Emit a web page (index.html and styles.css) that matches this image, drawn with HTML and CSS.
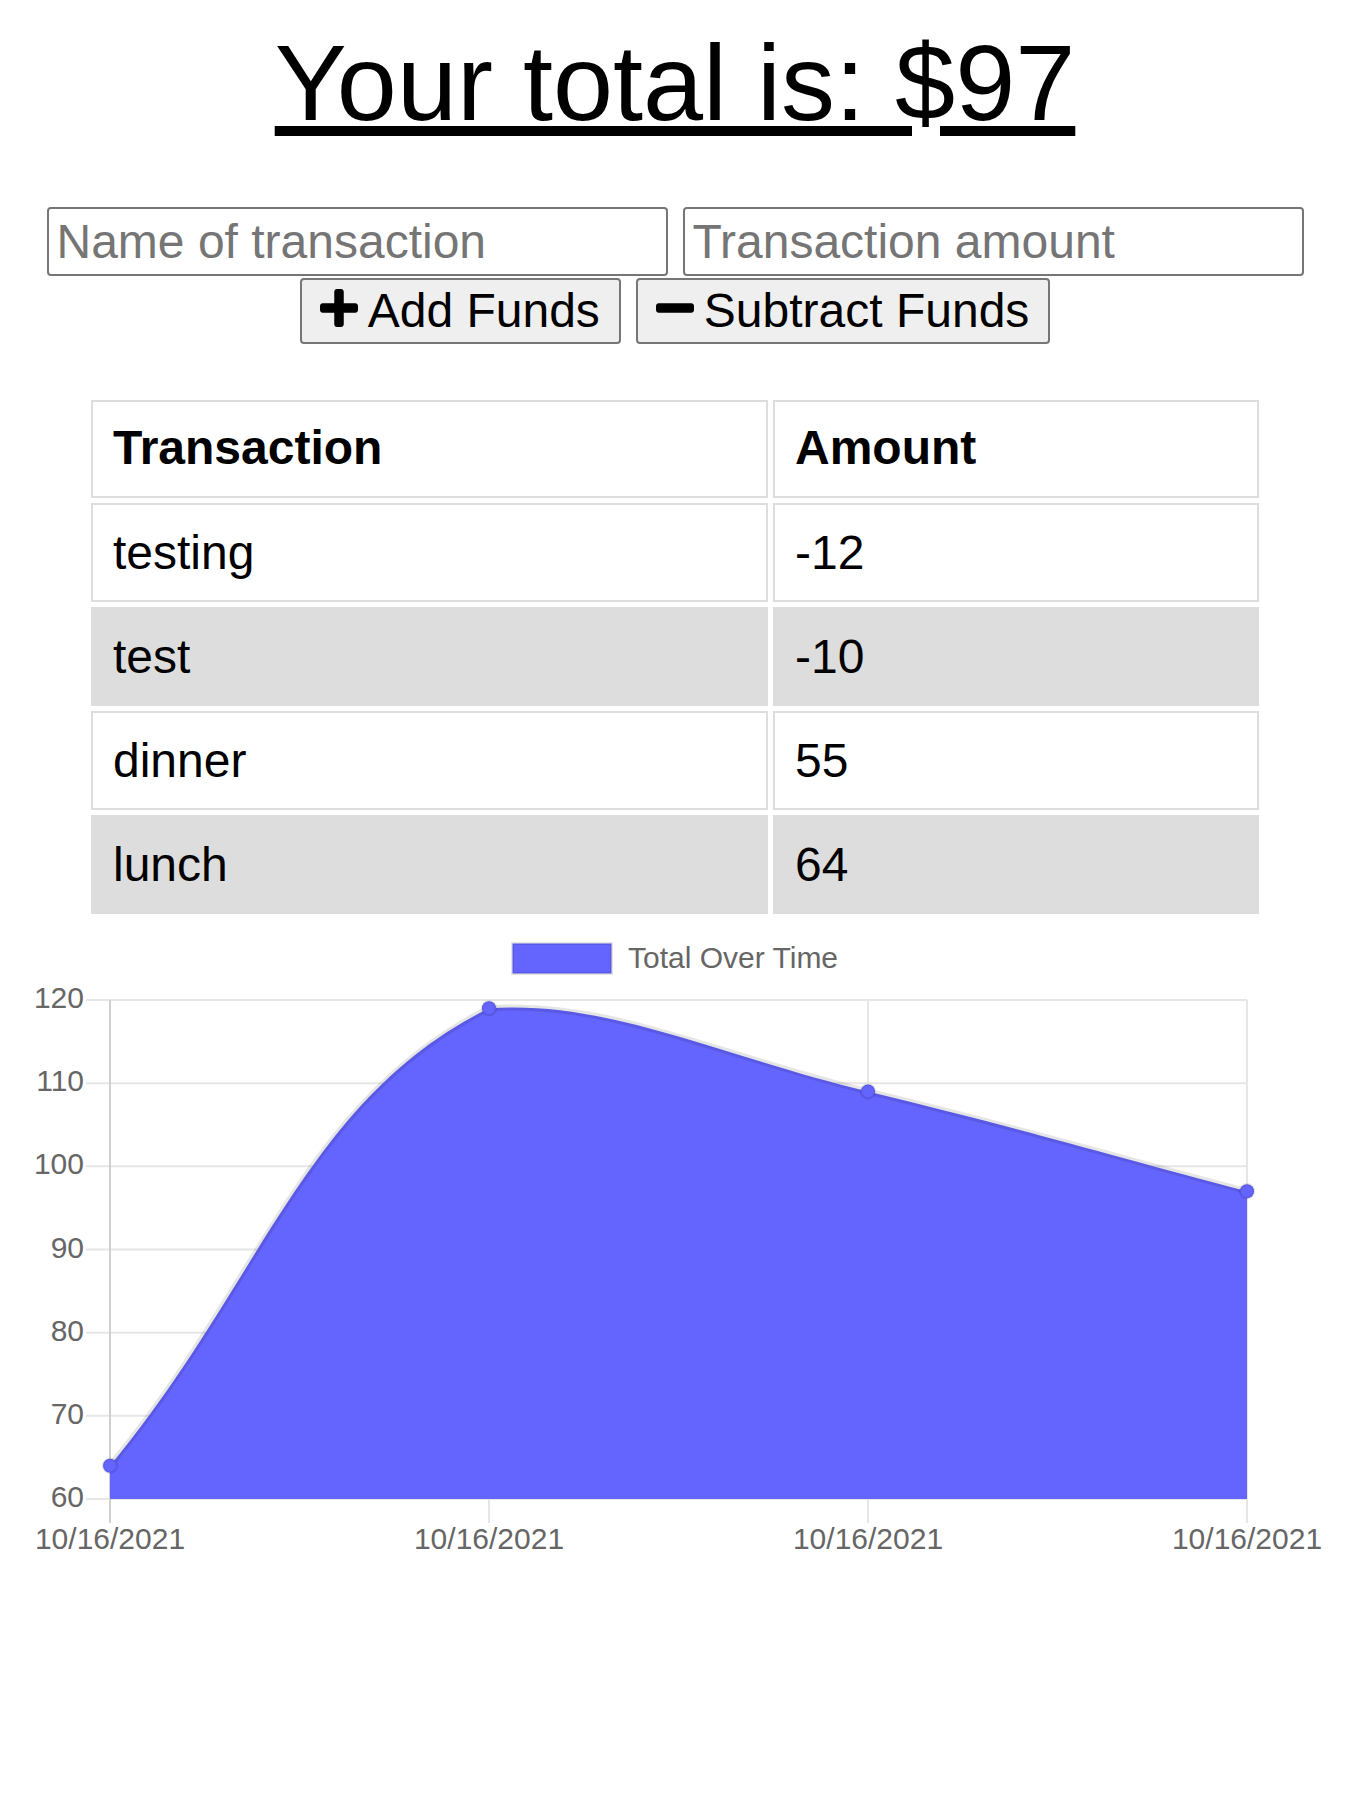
FILE: index.html
```html
<!DOCTYPE html>
<html lang="en">
<head>
<meta charset="utf-8">
<title>Budget Tracker</title>
<link rel="stylesheet" href="styles.css">
</head>
<body>
<h1 class="total">Your total is: $97</h1>
<form class="entry">
  <div class="fields">
    <input class="field" type="text" placeholder="Name of transaction">
    <input class="field" type="number" placeholder="Transaction amount">
  </div>
  <div class="actions">
    <button class="btn" type="button">
      <svg class="btn-icon" viewBox="0 0 448 448" width="38" height="38" aria-hidden="true"><path d="M416 168H280V32c0-17.67-14.33-32-32-32h-48c-17.670 0-32 14.33-32 32v136H32c-17.67 0-32 14.33-32 32v48c0 17.67 14.33 32 32 32h136v136c0 17.67 14.33 32 32 32h48c17.67 0 32-14.33 32-32V280h136c17.67 0 32-14.33 32-32v-48c0-17.67-14.33-32-32-32z"/></svg>
      <span>Add Funds</span>
    </button>
    <button class="btn" type="button">
      <svg class="btn-icon" viewBox="0 0 448 448" width="38" height="38" aria-hidden="true"><path d="M416 168H32c-17.67 0-32 14.33-32 32v48c0 17.67 14.33 32 32 32h384c17.67 0 32-14.33 32-32v-48c0-17.67-14.33-32-32-32z"/></svg>
      <span>Subtract Funds</span>
    </button>
  </div>
</form>

<table class="ledger">
  <thead>
    <tr><th class="col-name">Transaction</th><th>Amount</th></tr>
  </thead>
  <tbody>
    <tr><td>testing</td><td>-12</td></tr>
    <tr><td>test</td><td>-10</td></tr>
    <tr><td>dinner</td><td>55</td></tr>
    <tr><td>lunch</td><td>64</td></tr>
  </tbody>
</table>

<svg class="chart" width="1350" height="640" viewBox="0 0 1350 640">
  <g class="legend">
    <rect x="512.5" y="22.5" width="99" height="30" class="legend-box"/>
    <text x="628" y="47" class="label">Total Over Time</text>
  </g>
  <g class="grid">
    <line x1="86" y1="79" x2="1247" y2="79"/>
    <line x1="86" y1="162.2" x2="1247" y2="162.2"/>
    <line x1="86" y1="245.3" x2="1247" y2="245.3"/>
    <line x1="86" y1="328.5" x2="1247" y2="328.5"/>
    <line x1="86" y1="411.7" x2="1247" y2="411.7"/>
    <line x1="86" y1="494.8" x2="1247" y2="494.8"/>
    <line x1="86" y1="578" x2="1247" y2="578"/>
    <line x1="489" y1="79" x2="489" y2="602"/>
    <line x1="868" y1="79" x2="868" y2="602"/>
    <line x1="1247" y1="79" x2="1247" y2="602"/>
  </g>
  <line class="axis" x1="110" y1="79" x2="110" y2="602"/>
  <g class="label y-labels">
    <text x="84" y="87">120</text>
    <text x="84" y="170.2">110</text>
    <text x="84" y="253.3">100</text>
    <text x="84" y="336.5">90</text>
    <text x="84" y="419.7">80</text>
    <text x="84" y="502.8">70</text>
    <text x="84" y="586">60</text>
  </g>
  <g class="label x-labels">
    <text x="110" y="628">10/16/2021</text>
    <text x="489" y="628">10/16/2021</text>
    <text x="868" y="628">10/16/2021</text>
    <text x="1247" y="628">10/16/2021</text>
  </g>
  <path class="area" d="M110,544.7 C261.6,361.7 305.6,177.9 489,87.3 C608.8,79 717.2,134.1 868,170.5 C1020.4,207.3 1095.4,230.4 1247,270.3 L1247,578 L110,578 Z"/>
  <path class="line" d="M110,544.7 C261.6,361.7 305.6,177.9 489,87.3 C608.8,79 717.2,134.1 868,170.5 C1020.4,207.3 1095.4,230.4 1247,270.3"/>
  <g class="points">
    <circle cx="110" cy="544.7" r="7"/>
    <circle cx="489" cy="87.3" r="7"/>
    <circle cx="868" cy="170.5" r="7"/>
    <circle cx="1247" cy="270.3" r="7"/>
  </g>
</svg>
</body>
</html>
```
FILE: styles.css
```css
html, body {
  margin: 0;
  padding: 0;
  background: #fff;
}

body {
  font-family: "Liberation Sans", Arial, sans-serif;
  color: #000;
}

.total {
  margin: 20px 0 0;
  font-size: 108px;
  font-weight: normal;
  line-height: normal;
  text-align: center;
  text-decoration: underline;
}

.entry {
  margin-top: 62px;
}

.fields {
  display: flex;
  justify-content: center;
  gap: 15px;
}

.field {
  box-sizing: border-box;
  width: 621px;
  margin: 0;
  padding: 5px 8px;
  font-family: inherit;
  font-size: 48px;
  line-height: normal;
  color: #000;
  background: #fff;
  border: 2px solid #767676;
  border-radius: 4px;
  -moz-appearance: textfield;
}

.field::placeholder {
  color: #757575;
}

.field::-webkit-outer-spin-button,
.field::-webkit-inner-spin-button {
  -webkit-appearance: none;
  margin: 0;
}

.actions {
  display: flex;
  justify-content: center;
  gap: 15px;
  margin-top: 2px;
}

.btn {
  display: inline-flex;
  align-items: center;
  gap: 10px;
  margin: 0;
  padding: 3px 19px 4px 18px;
  font-family: inherit;
  font-size: 48px;
  line-height: normal;
  color: #000;
  background: #efefef;
  border: 2px solid #767676;
  border-radius: 4px;
}

.btn-icon {
  display: block;
  fill: #000;
  margin-top: -6px;
}

.ledger {
  width: 1178px;
  margin: 51px auto 0;
  border-spacing: 5px;
  table-layout: fixed;
  font-size: 48px;
}

.ledger th,
.ledger td {
  padding: 20px;
  border: 2px solid #dddddd;
  text-align: left;
  line-height: normal;
}

.ledger th {
  font-weight: bold;
  padding-top: 18px;
  padding-bottom: 21px;
}

.ledger .col-name {
  width: 633px;
}

.ledger tbody tr:nth-child(even) td {
  background: #dddddd;
}

.chart {
  display: block;
  margin-top: 2px;
}

.chart .label {
  font-family: "Liberation Sans", Arial, sans-serif;
  font-size: 30px;
  fill: #666666;
}

.chart .y-labels {
  text-anchor: end;
}

.chart .x-labels {
  text-anchor: middle;
}

.chart .legend-box {
  fill: #6464ff;
  stroke: rgba(0, 0, 0, 0.1);
  stroke-width: 3;
}

.chart .grid line {
  stroke: #e6e6e6;
  stroke-width: 2;
}

.chart .axis {
  stroke: #d0d0d0;
  stroke-width: 2;
}

.chart .area {
  fill: #6464ff;
}

.chart .line {
  fill: none;
  stroke: rgba(0, 0, 0, 0.1);
  stroke-width: 6;
}

.chart .points circle {
  fill: #6464ff;
  stroke: rgba(0, 0, 0, 0.1);
  stroke-width: 2.4;
}
```
